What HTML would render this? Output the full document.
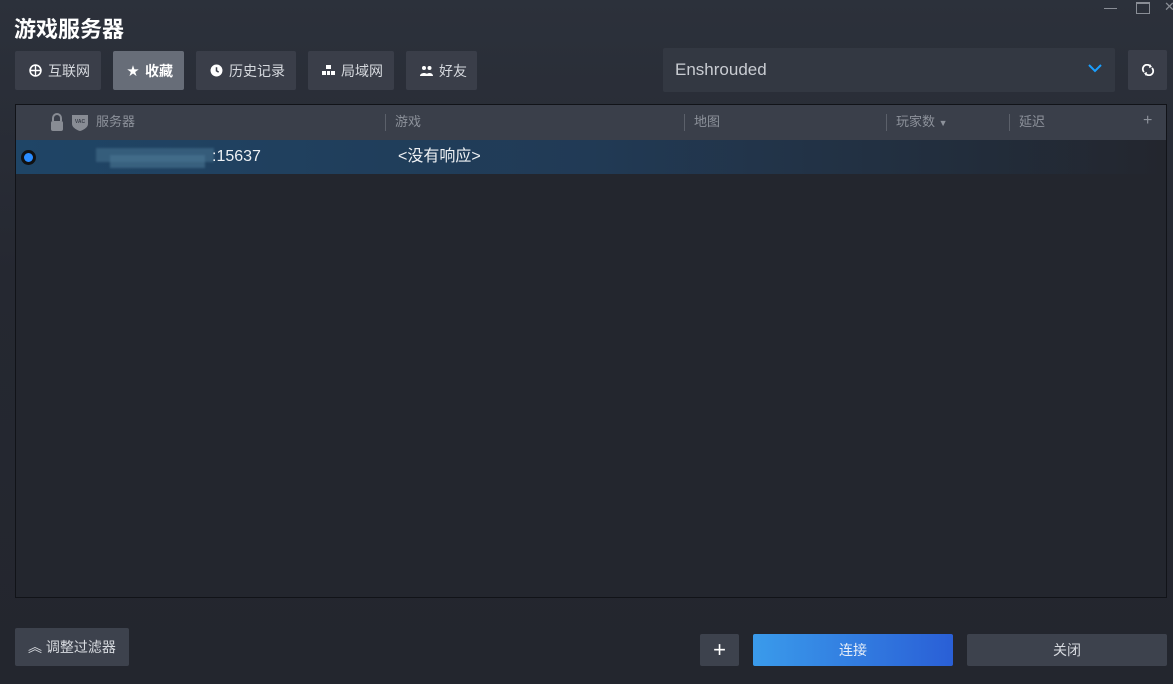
<!DOCTYPE html><html><head><meta charset="utf-8"><style>
*{margin:0;padding:0;box-sizing:border-box}
body{width:1173px;height:684px;overflow:hidden;background:linear-gradient(180deg,#2c313b 0%,#252831 40%,#23262e 100%);font-family:"Liberation Sans","Noto Sans CJK SC",sans-serif;color:#c8ccd3;position:relative}
.a{position:absolute;line-height:1}
.tab{position:absolute;top:51px;height:39px;background:#3a3e49;border-radius:2px;font-size:14px;color:#d6d9de;display:flex;align-items:center;padding-left:14px;gap:6px}
.btn{position:absolute;border-radius:2px;display:flex;align-items:center;justify-content:center;font-size:14px;color:#d8dbe0}
.hd{position:absolute;top:114px;font-size:13px;color:#8d929b;line-height:16px}
.sep{position:absolute;top:114px;width:1px;height:17px;background:#5b606a}
</style></head><body>
<div class="a" style="left:1104px;top:8px;width:13px;height:1px;background:#8a8e96"></div>
<div class="a" style="left:1136px;top:2px;width:14px;height:12px;border:1.5px solid #8a8e96;border-top-width:2px"></div>
<div class="a" style="left:1164px;top:0;font-size:13px;color:#8a8e96">✕</div>
<div class="a" style="left:14px;top:19px;font-size:22px;font-weight:bold;color:#fff">游戏服务器</div>
<div class="tab" style="left:15px;width:86px"><svg width="13" height="13" viewBox="0 0 12 12"><circle cx="6" cy="6" r="5" fill="none" stroke="#fff" stroke-width="1.5"/><path d="M1 6h10M6 1v10" stroke="#fff" stroke-width="1.3"/></svg>互联网</div>
<div class="tab" style="left:113px;width:71px;background:#676d78;color:#fff;font-weight:bold"><span style="font-size:12px">★</span>收藏</div>
<div class="tab" style="left:196px;width:100px"><svg width="13" height="13" viewBox="0 0 12 12"><circle cx="6" cy="6" r="5.5" fill="#fff"/><path d="M6 3v3.3l2 1.2" stroke="#3a3e49" stroke-width="1.4" fill="none"/></svg>历史记录</div>
<div class="tab" style="left:308px;width:86px"><svg width="13" height="12" viewBox="0 0 13 12"><rect x="4" y="0" width="5" height="4" fill="#fff"/><rect x="0" y="6" width="4" height="4" fill="#fff"/><rect x="5" y="6" width="3" height="4" fill="#fff"/><rect x="9" y="6" width="4" height="4" fill="#fff"/></svg>局域网</div>
<div class="tab" style="left:406px;width:71px"><svg width="13" height="11" viewBox="0 0 13 11"><circle cx="4" cy="3" r="2" fill="#fff"/><circle cx="9.5" cy="3" r="2" fill="#fff"/><path d="M0 11c0-4 8-4 8 0zM6 11c0-4 7-4 7 0z" fill="#fff"/></svg>好友</div>
<div class="a" style="left:663px;top:48px;width:452px;height:44px;background:#333842;border-radius:2px"></div>
<div class="a" style="left:675px;top:61px;font-size:17px;color:#c9ccd2">Enshrouded</div>
<svg class="a" style="left:1088px;top:64px" width="14" height="9" viewBox="0 0 14 9"><path d="M1 1l6 6 6-6" stroke="#1a9fff" stroke-width="2" fill="none"/></svg>
<div class="btn" style="left:1128px;top:50px;width:39px;height:40px;background:#3a3e49"><svg width="14" height="12" viewBox="0 0 14 12"><path d="M3 8a4 4 0 0 1 6-6M11 4a4 4 0 0 1-6 6" stroke="#fff" stroke-width="1.8" fill="none"/><path d="M9 0l2 3-3 1zM5 12l-2-3 3-1z" fill="#fff"/></svg></div>
<div class="a" style="left:15px;top:104px;width:1152px;height:494px;background:#23262e;border:1px solid #111318"></div>
<div class="a" style="left:16px;top:105px;width:1150px;height:35px;background:#3a3f4a"></div>
<svg class="a" style="left:50px;top:113px" width="14" height="18" viewBox="0 0 14 18"><path d="M3 8V5a4 4 0 0 1 8 0v3" stroke="#888c94" stroke-width="2" fill="none"/><rect x="1" y="8" width="12" height="10" rx="2" fill="#888c94"/></svg>
<svg class="a" style="left:72px;top:114px" width="16" height="17" viewBox="0 0 16 17"><path d="M0 1h16v9c0 3-4 6-8 7-4-1-8-4-8-7z" fill="#888c94"/><text x="8" y="9" font-size="5" fill="#3a3f4a" text-anchor="middle" font-family="Liberation Sans" font-weight="bold">VAC</text></svg>
<div class="hd" style="left:96px">服务器</div>
<div class="sep" style="left:385px"></div><div class="hd" style="left:395px">游戏</div>
<div class="sep" style="left:684px"></div><div class="hd" style="left:694px">地图</div>
<div class="sep" style="left:886px"></div><div class="hd" style="left:896px">玩家数 <span style="font-size:9px">▼</span></div>
<div class="sep" style="left:1009px"></div><div class="hd" style="left:1019px">延迟</div>
<div class="hd" style="left:1143px;font-size:16px;top:113px">+</div>
<div class="a" style="left:16px;top:140px;width:1150px;height:34px;background:linear-gradient(90deg,#1f4566 0%,#213a55 50%,#23262e 100%)"></div>
<div class="a" style="left:21px;top:150px;width:15px;height:15px;border-radius:50%;background:#111;"></div>
<div class="a" style="left:24px;top:153px;width:9px;height:9px;border-radius:50%;background:#2a8cff"></div>
<div class="a" style="left:96px;top:148px;width:118px;height:14px;background:#3f6886;opacity:.7;filter:blur(1px)"></div>
<div class="a" style="left:110px;top:155px;width:95px;height:13px;background:#4a7592;opacity:.6;filter:blur(1px)"></div>
<div class="a" style="left:212px;top:149px;font-size:16px;color:#eef1f4">:15637</div>
<div class="a" style="left:398px;top:149px;font-size:16px;color:#eef1f4">&lt;没有响应&gt;</div>
<div class="btn" style="left:15px;top:628px;width:114px;height:38px;background:#3d424d;font-size:14px">︽ 调整过滤器</div>
<div class="btn" style="left:700px;top:634px;width:39px;height:32px;background:#3d424d;font-size:22px;color:#fff">+</div>
<div class="btn" style="left:753px;top:634px;width:200px;height:32px;background:linear-gradient(90deg,#3a9beb,#2a5fd6);color:#e6eef8">连接</div>
<div class="btn" style="left:967px;top:634px;width:200px;height:32px;background:#3d424d">关闭</div>
</body></html>
